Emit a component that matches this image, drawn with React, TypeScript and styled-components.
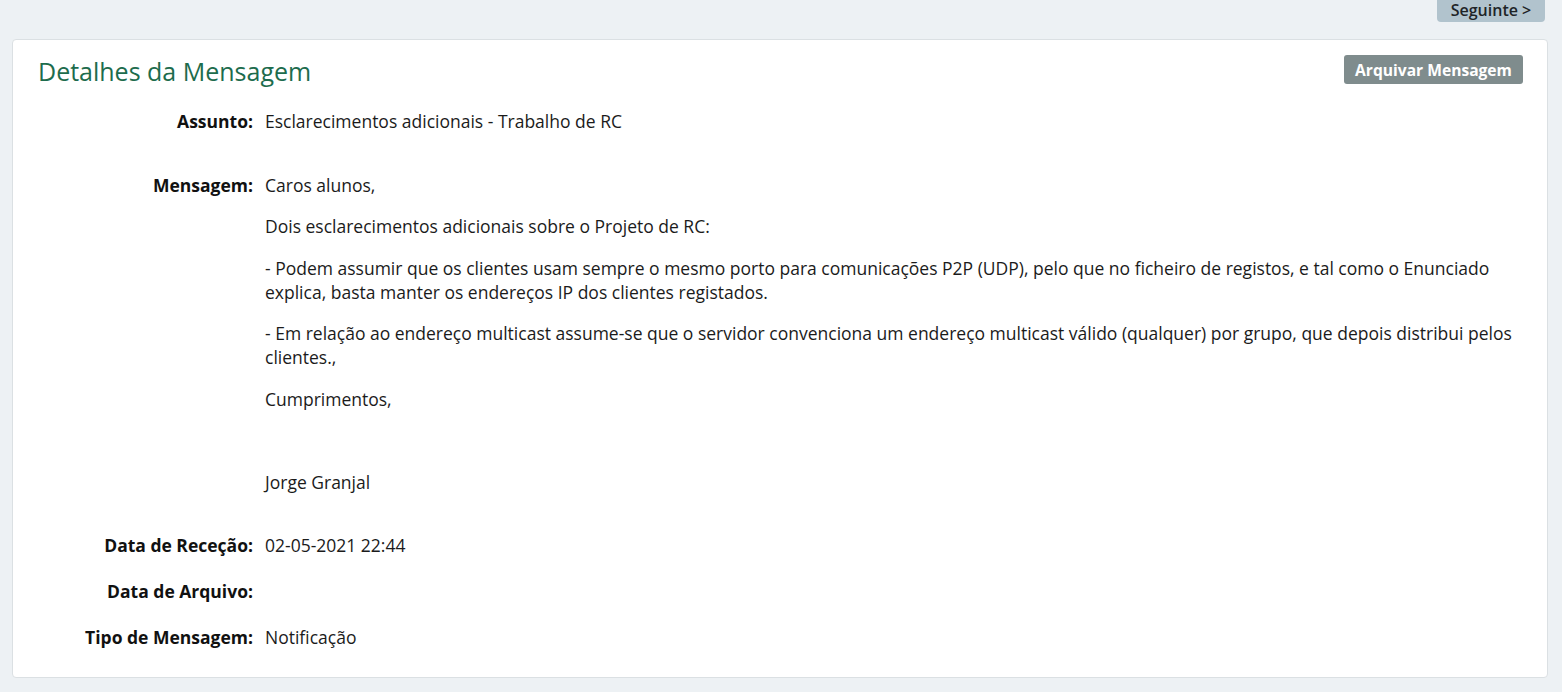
import React from "react";
import styled, { createGlobalStyle } from "styled-components";

const GlobalStyle = createGlobalStyle`
  html, body {
    margin: 0;
    padding: 0;
    background: #edf1f4;
    font-family: "Open Sans", "Liberation Sans", sans-serif;
    color: #1b1b1b;
  }
  * { box-sizing: border-box; }
`;

const Page = styled.div`
  display: flex;
  flex-direction: column;
  padding: 0 14px 14px 12px;
`;

const TopBar = styled.div`
  display: flex;
  justify-content: flex-end;
  padding-right: 3px;
`;

const NextButton = styled.button`
  height: 22px;
  width: 108px;
  border: none;
  border-radius: 0 0 4px 4px;
  background: #b1c3cd;
  color: #1e2427;
  font-family: inherit;
  font-weight: 600;
  font-size: 16px;
  line-height: 18px;
  padding: 0 0 3px;
  cursor: pointer;
`;

const Card = styled.section`
  margin-top: 17px;
  background: #ffffff;
  border: 1px solid #dbe0e3;
  border-radius: 4px;
  padding: 15px 24px 28px 25px;
`;

const Header = styled.div`
  display: flex;
  justify-content: space-between;
  align-items: flex-start;
  margin-bottom: 22px;
`;

const Title = styled.h2`
  margin: 0;
  font-size: 25px;
  line-height: 32px;
  font-weight: 400;
  color: #1d6c4d;
`;

const ArchiveButton = styled.button`
  height: 29px;
  width: 179px;
  border: none;
  border-radius: 3px;
  background: #7f8c8d;
  color: #ffffff;
  font-family: inherit;
  font-weight: 700;
  font-size: 15.6px;
  padding: 0;
  cursor: pointer;
`;

const Details = styled.div`
  display: flex;
  flex-direction: column;
  gap: 22px;
`;

const Row = styled.div`
  display: grid;
  grid-template-columns: 215px 1fr;
  column-gap: 12px;
  font-size: 17.5px;
  line-height: 24px;
`;

const Label = styled.div`
  font-weight: 700;
  text-align: right;
  color: #111;
`;

const Value = styled.div`
  color: #1b1b1b;
`;

const Para = styled.p`
  margin: 0 0 17.5px;
`;

const messageParagraphs = [
  "Caros alunos,",
  "Dois esclarecimentos adicionais sobre o Projeto de RC:",
  "- Podem assumir que os clientes usam sempre o mesmo porto para comunicações P2P (UDP), pelo que no ficheiro de registos, e tal como o Enunciado explica, basta manter os endereços IP dos clientes registados.",
  "- Em relação ao endereço multicast assume-se que o servidor convenciona um endereço multicast válido (qualquer) por grupo, que depois distribui pelos clientes.,",
  "Cumprimentos,",
  "\u00a0",
  "Jorge Granjal",
];

export default function App() {
  return (
    <>
      <GlobalStyle />
      <Page>
        <TopBar>
          <NextButton>Seguinte &gt;</NextButton>
        </TopBar>
        <Card>
          <Header>
            <Title>Detalhes da Mensagem</Title>
            <ArchiveButton>Arquivar Mensagem</ArchiveButton>
          </Header>
          <Details>
            <Row>
              <Label>Assunto:</Label>
              <Value>
                <Para>Esclarecimentos adicionais - Trabalho de RC</Para>
              </Value>
            </Row>
            <Row>
              <Label>Mensagem:</Label>
              <Value>
                {messageParagraphs.map((p, i) => (
                  <Para key={i}>{p}</Para>
                ))}
              </Value>
            </Row>
            <Row>
              <Label>Data de Receção:</Label>
              <Value>02-05-2021 22:44</Value>
            </Row>
            <Row>
              <Label>Data de Arquivo:</Label>
              <Value></Value>
            </Row>
            <Row>
              <Label>Tipo de Mensagem:</Label>
              <Value>Notificação</Value>
            </Row>
          </Details>
        </Card>
      </Page>
    </>
  );
}
